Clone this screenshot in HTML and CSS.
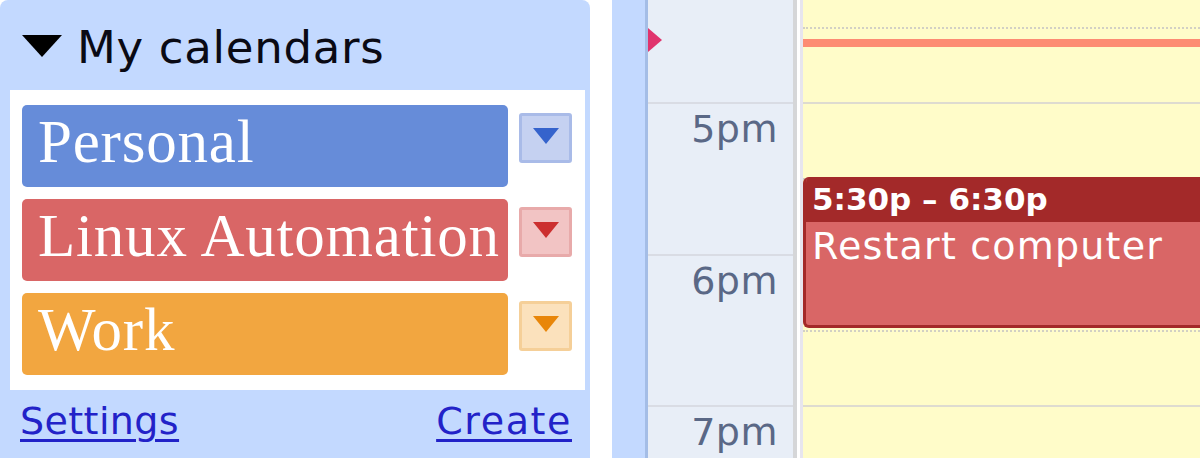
FILE: index.html
```html
<!DOCTYPE html>
<html>
<head>
<meta charset="utf-8">
<link rel="stylesheet" href="styles.css">
</head>
<body>
<div class="page">
  <aside class="sidebar">
    <div class="heading">
      <svg class="tri" width="40" height="22" viewBox="0 0 40 22"><polygon points="0,0 40,0 20,22" fill="#000"/></svg>
      <span class="heading-text">My calendars</span>
    </div>
    <div class="list">
      <div class="row">
        <div class="cal cal-personal">Personal</div>
        <div class="menu menu-personal"><svg width="26" height="16" viewBox="0 0 26 16"><polygon points="0,0 26,0 13,16"/></svg></div>
      </div>
      <div class="row">
        <div class="cal cal-linux">Linux Automation</div>
        <div class="menu menu-linux"><svg width="26" height="16" viewBox="0 0 26 16"><polygon points="0,0 26,0 13,16"/></svg></div>
      </div>
      <div class="row">
        <div class="cal cal-work">Work</div>
        <div class="menu menu-work"><svg width="26" height="16" viewBox="0 0 26 16"><polygon points="0,0 26,0 13,16"/></svg></div>
      </div>
    </div>
    <div class="links">
      <a href="#" class="settings">Settings</a>
      <a href="#" class="create">Create</a>
    </div>
  </aside>
  <div class="gutter"></div>
  <div class="strip"></div>
  <div class="timecol">
    <div class="now-marker"></div>
    <div class="hours">
      <div class="hour"></div>
      <div class="hour">5pm</div>
      <div class="hour">6pm</div>
      <div class="hour">7pm</div>
    </div>
  </div>
  <div class="sep"></div>
  <div class="daycol">
    <div class="slots">
      <div class="slot"><div class="half"></div></div>
      <div class="slot"><div class="half"></div></div>
      <div class="slot"><div class="half"></div></div>
      <div class="slot"><div class="half"></div></div>
    </div>
    <div class="now-line"></div>
    <div class="event">
      <div class="event-time">5:30p – 6:30p</div>
      <div class="event-title">Restart computer</div>
    </div>
  </div>
</div>
</body>
</html>
```

FILE: styles.css
```css
html, body {
  margin: 0;
  padding: 0;
  background: #ffffff;
}
.page {
  display: flex;
  height: 458px;
  width: 1200px;
  overflow: hidden;
  font-family: "DejaVu Sans", sans-serif;
}
.sidebar {
  width: 590px;
  flex: none;
  background: #c3d9ff;
  border-radius: 8px 8px 0 0;
  box-sizing: border-box;
  padding: 0 5px 0 10px;
  display: flex;
  flex-direction: column;
}
.heading {
  height: 90px;
  box-sizing: border-box;
  padding-top: 22px;
  display: flex;
  align-items: flex-start;
}
.tri {
  margin: 13px 0 0 12px;
  flex: none;
}
.heading-text {
  margin-left: 15px;
  font-size: 45px;
  line-height: 52px;
  color: #0a0a14;
  letter-spacing: 0.7px;
}
.list {
  background: #ffffff;
  padding: 15px 13px 15px 12px;
  display: flex;
  flex-direction: column;
  gap: 12px;
}
.row {
  display: flex;
  align-items: flex-start;
  gap: 11px;
}
.cal {
  width: 486px;
  height: 82px;
  box-sizing: border-box;
  border-radius: 5px;
  padding: 0 0 0 16px;
  font-family: "Liberation Serif", serif;
  font-size: 61px;
  line-height: 73px;
  letter-spacing: 0.8px;
  color: #ffffff;
  white-space: nowrap;
  overflow: hidden;
}
.cal-personal { background: #668cd9; }
.cal-linux { background: #d96666; }
.cal-work { background: #f2a640; }
.menu {
  width: 53px;
  height: 50px;
  margin-top: 8px;
  box-sizing: border-box;
  border: 3px solid;
  border-radius: 3px;
  display: flex;
  align-items: center;
  justify-content: center;
}
.menu svg { margin-top: -4px; }
.menu-personal { background: #c5d1f1; border-color: #a9bbe8; }
.menu-personal polygon { fill: #3563cc; }
.menu-linux { background: #f2c4c4; border-color: #e8aaaa; }
.menu-linux polygon { fill: #cc2f2f; }
.menu-work { background: #fbe1bc; border-color: #f5cf98; }
.menu-work polygon { fill: #e8860a; }
.links {
  display: flex;
  justify-content: space-between;
  padding: 9px 13px 0 10px;
}
.links a {
  font-size: 38px;
  line-height: 44px;
  color: #2222c8;
  text-decoration: underline;
  text-decoration-thickness: 3px;
  text-underline-offset: 5px;
}
.settings { letter-spacing: 0.4px; }
.create { letter-spacing: 1.6px; }
.gutter {
  width: 22px;
  flex: none;
  background: #ffffff;
}
.strip {
  width: 33px;
  flex: none;
  background: #c3d9ff;
  border-right: 3px solid #a4bde6;
}
.timecol {
  width: 145px;
  flex: none;
  background: #e8eef7;
  position: relative;
}
.hours {
  margin-top: -49.5px;
}
.hour {
  height: 151.5px;
  box-sizing: border-box;
  border-top: 2px solid #d9dce4;
  padding: 3px 15px 0 0;
  text-align: right;
  font-size: 38px;
  line-height: 45px;
  letter-spacing: 0.5px;
  color: #5a6886;
}
.now-marker {
  position: absolute;
  left: 0;
  top: 28px;
  width: 0;
  height: 0;
  border-top: 12px solid transparent;
  border-bottom: 12px solid transparent;
  border-left: 14px solid #e0336d;
}
.sep {
  width: 3px;
  flex: none;
  background: #ffffff;
  border-left: 4px solid #d5d6d8;
  border-right: 3px solid #e7e5ee;
}
.daycol {
  flex: 1;
  background: #fffcc9;
  position: relative;
}
.slots {
  margin-top: -49.5px;
}
.slot {
  height: 151.5px;
  box-sizing: border-box;
  border-top: 2px solid #dedbd0;
}
.half {
  height: 74px;
  border-bottom: 2px dotted #d2d0c4;
}
.now-line {
  position: absolute;
  left: 0;
  right: 0;
  top: 39px;
  height: 8px;
  background: #fd8c73;
}
.event {
  position: absolute;
  left: 0;
  right: -20px;
  top: 177px;
  height: 151px;
  box-sizing: border-box;
  background: #d96666;
  border-left: 3px solid #a32929;
  border-bottom: 3px solid #a32929;
  border-radius: 6px;
  overflow: hidden;
  color: #ffffff;
}
.event-time {
  background: #a32929;
  height: 45px;
  box-sizing: border-box;
  padding: 3px 0 0 6px;
  font-weight: bold;
  font-size: 31px;
  line-height: 38px;
}
.event-title {
  padding: 0 0 0 6px;
  font-size: 38px;
  line-height: 46px;
  letter-spacing: 1.2px;
  margin-top: 1px;
}
```
